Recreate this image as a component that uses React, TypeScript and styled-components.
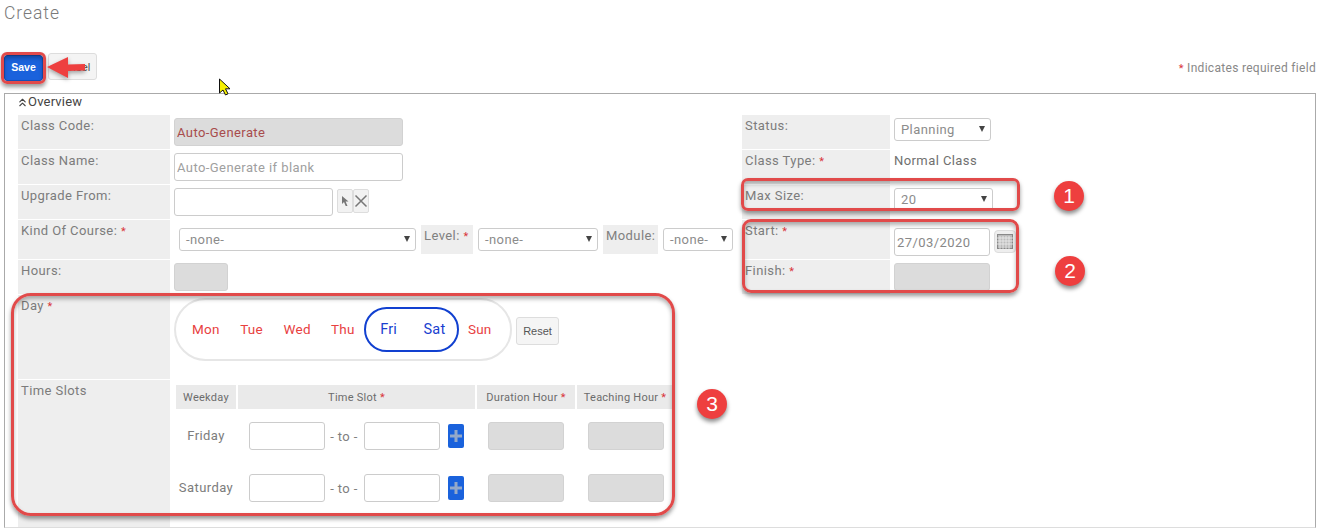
import React from "react";
import styled, { createGlobalStyle } from "styled-components";
import { ChevronsUp } from "lucide-react";

const Global = createGlobalStyle`
  html, body { margin: 0; padding: 0; background: #fff; }
  body { font-family: Roboto, "Liberation Sans", sans-serif; color: #808080; }
  * { box-sizing: border-box; }
`;

const Page = styled.div`
  position: relative;
  width: 1318px;
  height: 529px;
  overflow: hidden;
  padding-left: 4px;
  font-size: 13px;
  letter-spacing: 0.42px;
`;
const Title = styled.h1`
  margin: 0;
  height: 53px;
  padding-top: 2px;
  font-size: 17.5px;
  line-height: 22px;
  font-weight: 300;
  letter-spacing: 0.95px;
  color: #7a7a7a;
`;
const Toolbar = styled.div`
  display: flex;
  align-items: flex-start;
  height: 40px;
  padding-right: 2px;
`;
const SaveButton = styled.button`
  width: 39px;
  height: 26px;
  margin-top: 2px;
  padding: 0 0 2px;
  border: 1px solid #1450b8;
  border-radius: 3px;
  background: #1a62dc;
  color: #fff;
  font: 700 10.5px "Liberation Sans", sans-serif;
`;
const CancelButton = styled.button`
  width: 49px;
  height: 27px;
  margin-left: 5px;
  padding: 0;
  border: 1px solid #ddd;
  border-radius: 3px;
  background: #f4f4f4;
  color: #555;
  font: 11.5px "Liberation Sans", sans-serif;
`;
const Required = styled.span`
  margin-left: auto;
  margin-top: 8px;
  font-size: 12px;
  color: #888;
  letter-spacing: 0.3px;
`;
const Star = styled.span`
  color: #d9343a;
  font-size: 11px;
`;
const Panel = styled.section`
  width: 1312px;
  height: 435px;
  border: 1px solid #aaa;
  border-bottom-color: #ddd;
  padding-left: 13px;
`;
const PanelHead = styled.div`
  display: flex;
  align-items: flex-start;
  height: 21px;
  color: #444;
  font-size: 13px;
  letter-spacing: 0.2px;
  line-height: 15px;
  svg { margin: 2px -1px 0 -2px; }
`;
const Columns = styled.div`
  display: flex;
`;
const Column = styled.div<{ $width: number }>`
  width: ${(p) => p.$width}px;
  display: flex;
  flex-direction: column;
  gap: 1px;
`;
const Row = styled.div<{ $h: number; $label?: number }>`
  display: grid;
  grid-template-columns: ${(p) => p.$label ?? 152}px 1fr;
  height: ${(p) => p.$h}px;
`;
const Label = styled.div`
  background: #eee;
  padding: 2px 0 0 3px;
  line-height: 17px;
  color: #7c7c7c;
`;
const Value = styled.div<{ $indent?: number; $top?: number }>`
  display: flex;
  align-items: flex-start;
  padding-top: ${(p) => p.$top ?? 3}px;
  padding-left: ${(p) => p.$indent ?? 4}px;
  min-width: 0;
`;
const TextBox = styled.input<{ $width: number }>`
  width: ${(p) => p.$width}px;
  height: 28px;
  padding: 0 2px;
  border: 1px solid #ccc;
  border-radius: 3px;
  background: #fff;
  font: 13px Roboto, sans-serif;
  letter-spacing: 0.42px;
  color: #888;
  outline: none;
  &::placeholder { color: #a0a0a0; opacity: 1; }
  &:disabled { background: #dcdcdc; color: #a84c4c; border-color: #d2d2d2; }
`;
const PickButton = styled.button<{ $first?: boolean }>`
  display: flex;
  align-items: center;
  justify-content: center;
  width: 16px;
  height: 24px;
  margin: 1px 0 0 ${(p) => (p.$first ? 4 : 0)}px;
  padding: 0;
  border: 1px solid #ddd;
  border-radius: 2px;
  background: #f2f2f2;
`;
const SelectBox = styled.div<{ $width: number }>`
  display: flex;
  align-items: center;
  justify-content: space-between;
  width: ${(p) => p.$width}px;
  height: 23px;
  padding: 0 4px 1px 6px;
  border: 1px solid #ccc;
  border-radius: 3px;
  background: #fff;
  color: #8c8c8c;
  flex: none;
`;
const Caret = styled.i`
  width: 0;
  height: 0;
  border-left: 3.5px solid transparent;
  border-right: 3.5px solid transparent;
  border-top: 6px solid #444;
  margin-right: 1px;
`;
const InlineLabel = styled.div<{ $width: number; $gap: number }>`
  width: ${(p) => p.$width}px;
  height: 29px;
  margin: -3px 5px 0 ${(p) => p.$gap}px;
  padding: 2px 0 0 3px;
  background: #eee;
  line-height: 17px;
  white-space: nowrap;
  flex: none;
`;
const DayPill = styled.div`
  display: grid;
  grid-template-columns: repeat(7, 45.67px);
  align-items: center;
  justify-items: center;
  position: relative;
  width: 338px;
  height: 63px;
  padding-left: 7px;
  border: 2px solid #e6e6e6;
  border-radius: 32px;
`;
const Selected = styled.div`
  grid-column: 5 / span 2;
  grid-row: 1;
  justify-self: stretch;
  margin: 0 -2.5px 0 -2px;
  display: grid;
  grid-template-columns: 1fr 1fr;
  align-items: center;
  justify-items: center;
  height: 45px;
  border: 2px solid #1140d0;
  border-radius: 23px;
`;
const Day = styled.span<{ $on?: boolean }>`
  font-size: ${(p) => (p.$on ? 14.5 : 13.5)}px;
  letter-spacing: 0.2px;
  margin-bottom: 1px;
  color: ${(p) => (p.$on ? "#1a3fd0" : "#e8413f")};
`;
const ResetButton = styled.button`
  width: 43px;
  height: 28px;
  margin: 19px 0 0 4px;
  padding: 0;
  border: 1px solid #ddd;
  border-radius: 3px;
  background: #f5f5f5;
  font: 11px "Liberation Sans", sans-serif;
  color: #555;
`;
const SlotTable = styled.div`
  display: grid;
  grid-template-columns: 60px 237px 98px 96px;
  grid-auto-rows: 52px;
  column-gap: 2px;
`;
const SlotHead = styled.div`
  height: 24px;
  margin-bottom: -1px;
  background: #eaeaea;
  display: flex;
  align-items: center;
  justify-content: center;
  font-size: 11px;
  letter-spacing: 0.25px;
  color: #6c6c6c;
  white-space: nowrap;
`;
const HeadRow = styled(SlotTable)`
  grid-auto-rows: 25px;
`;
const DayName = styled.div`
  display: flex;
  align-items: center;
  justify-content: center;
  padding-bottom: 2px;
  color: #7c7c7c;
`;
const SlotCell = styled.div`
  display: flex;
  align-items: center;
  padding-left: 11px;
`;
const To = styled.span`
  width: 39px;
  padding-right: 1px;
  text-align: center;
  white-space: nowrap;
`;
const PlusButton = styled.button`
  display: flex;
  align-items: center;
  justify-content: center;
  width: 16px;
  height: 24px;
  margin-left: 8px;
  padding: 0;
  border: 0;
  border-radius: 2px;
  background: #1a62dc;
`;
const CalButton = styled.button`
  display: flex;
  align-items: center;
  justify-content: center;
  width: 22px;
  height: 23px;
  margin: 2px 0 0 4px;
  padding: 0;
  border: 1px solid #ddd;
  border-radius: 4px;
  background: #eee;
`;
const StaticText = styled.span`
  line-height: 17px;
  color: #707070;
`;
const Callout = styled.div<{ $x: number; $y: number; $w: number; $h: number; $r: number }>`
  position: absolute;
  left: ${(p) => p.$x}px;
  top: ${(p) => p.$y}px;
  width: ${(p) => p.$w}px;
  height: ${(p) => p.$h}px;
  border: 3px solid #e14a4a;
  border-radius: ${(p) => p.$r}px;
  box-shadow: 0 3px 4px rgba(0, 0, 0, 0.4), inset 0 3px 4px rgba(0, 0, 0, 0.3);
  pointer-events: none;
`;
const Badge = styled.div<{ $x: number; $y: number }>`
  position: absolute;
  left: ${(p) => p.$x}px;
  top: ${(p) => p.$y}px;
  width: 30px;
  height: 30px;
  border-radius: 50%;
  background: #ee3f3f;
  color: #fff;
  font: 21px/30px "Liberation Sans", sans-serif;
  text-align: center;
  letter-spacing: 0;
  box-shadow: 0 3px 4px rgba(0, 0, 0, 0.45);
`;
const Floating = styled.svg<{ $x: number; $y: number }>`
  position: absolute;
  left: ${(p) => p.$x}px;
  top: ${(p) => p.$y}px;
  overflow: visible;
`;

const Plus = () => (
  <svg width="14" height="14" viewBox="0 0 14 14">
    <path d="M5.5 1h3v4.500H13v3H8.500V13h-3V8.500H1v-3h4.500z" fill="#94a9c9" />
  </svg>
);

const Slot = ({ day }: { day: string }) => (
  <>
    <DayName>{day}</DayName>
    <SlotCell>
      <TextBox $width={76} />
      <To>- to -</To>
      <TextBox $width={76} />
      <PlusButton aria-label="Add"><Plus /></PlusButton>
    </SlotCell>
    <SlotCell><TextBox $width={76} disabled /></SlotCell>
    <SlotCell><TextBox $width={76} disabled /></SlotCell>
  </>
);

export default function App() {
  return (
    <Page>
      <Global />
      <Title>Create</Title>
      <Toolbar>
        <SaveButton>Save</SaveButton>
        <CancelButton>Cancel</CancelButton>
        <Required><Star>*</Star> Indicates required field</Required>
      </Toolbar>
      <Panel>
        <PanelHead><ChevronsUp size={13} strokeWidth={2} color="#444" />Overview</PanelHead>
        <Columns>
          <Column $width={724}>
            <Row $h={34}>
              <Label>Class Code:</Label>
              <Value><TextBox $width={229} disabled defaultValue="Auto-Generate" /></Value>
            </Row>
            <Row $h={34}>
              <Label>Class Name:</Label>
              <Value><TextBox $width={229} placeholder="Auto-Generate if blank" /></Value>
            </Row>
            <Row $h={34}>
              <Label>Upgrade From:</Label>
              <Value>
                <TextBox $width={159} />
                <PickButton $first aria-label="Pick">
                  <svg width="10" height="12" viewBox="0 0 10 12"><path d="M2 1l6.500 5.500H5.600L7.500 11H5.700L4 7l-2 2z" fill="#777" /></svg>
                </PickButton>
                <PickButton aria-label="Clear">
                  <svg width="14" height="14" viewBox="0 0 14 14"><path d="M1.500 1.500l11 11M12.500 1.500l-11 11" stroke="#777" strokeWidth="1.500" /></svg>
                </PickButton>
              </Value>
            </Row>
            <Row $h={39}>
              <Label>Kind Of Course: <Star>*</Star></Label>
              <Value $indent={9} $top={8}>
                <SelectBox $width={237}>-none-<Caret /></SelectBox>
                <InlineLabel $width={52} $gap={5}>Level: <Star>*</Star></InlineLabel>
                <SelectBox $width={120}>-none-<Caret /></SelectBox>
                <InlineLabel $width={55} $gap={5}>Module:</InlineLabel>
                <SelectBox $width={70}>-none-<Caret /></SelectBox>
              </Value>
            </Row>
            <Row $h={34}>
              <Label>Hours:</Label>
              <Value><TextBox $width={54} disabled /></Value>
            </Row>
            <Row $h={84}>
              <Label>Day <Star>*</Star></Label>
              <Value>
                <DayPill>
                  <Day>Mon</Day><Day>Tue</Day><Day>Wed</Day><Day>Thu</Day>
                  <Selected><Day $on>Fri</Day><Day $on>Sat</Day></Selected>
                  <Day>Sun</Day>
                </DayPill>
                <ResetButton>Reset</ResetButton>
              </Value>
            </Row>
            <Row $h={147}>
              <Label>Time Slots</Label>
              <Value $indent={6} $top={5}>
                <div>
                  <HeadRow>
                    <SlotHead>Weekday</SlotHead>
                    <SlotHead>Time Slot&nbsp;<Star>*</Star></SlotHead>
                    <SlotHead>Duration Hour&nbsp;<Star>*</Star></SlotHead>
                    <SlotHead>Teaching Hour&nbsp;<Star>*</Star></SlotHead>
                  </HeadRow>
                  <SlotTable>
                    <Slot day="Friday" />
                    <Slot day="Saturday" />
                  </SlotTable>
                </div>
              </Value>
            </Row>
          </Column>
          <Column $width={290}>
            <Row $h={34} $label={148}>
              <Label>Status:</Label>
              <Value><SelectBox $width={97}>Planning<Caret /></SelectBox></Value>
            </Row>
            <Row $h={34} $label={148}>
              <Label>Class Type: <Star>*</Star></Label>
              <Value $top={2}><StaticText>Normal Class</StaticText></Value>
            </Row>
            <Row $h={34} $label={148}>
              <Label>Max Size:</Label>
              <Value><SelectBox $width={99}>20<Caret /></SelectBox></Value>
            </Row>
            <Row $h={39} $label={148}>
              <Label>Start: <Star>*</Star></Label>
              <Value $top={8}>
                <TextBox $width={96} defaultValue="27/03/2020" />
                <CalButton aria-label="Calendar">
                  <svg width="16" height="15" viewBox="0 0 16 15">
                    <rect x="0.500" y="0.500" width="15" height="14" fill="#bbb" stroke="#888" />
                    <path d="M0 4h16M0 7h16M0 10h16M3 2v13M6 2v13M9 2v13M12 2v13" stroke="#eee" strokeWidth="0.800" />
                  </svg>
                </CalButton>
              </Value>
            </Row>
            <Row $h={34} $label={148}>
              <Label>Finish: <Star>*</Star></Label>
              <Value><TextBox $width={96} disabled /></Value>
            </Row>
          </Column>
        </Columns>
      </Panel>

      <Callout $x={1} $y={52} $w={45} $h={32} $r={6} />
      <Floating $x={46} $y={56} width="40" height="23" viewBox="0 0 40 23">
        <path d="M1 11L22 1v7.500l17-.5v6.500l-17 .500V22z" fill="#ee4040" style={{ filter: "drop-shadow(0 2px 2px rgba(0,0,0,.35))" }} />
      </Floating>
      <Floating $x={218} $y={78} width="15" height="18" viewBox="0 0 15 18">
        <path d="M1.500 1v14l3.500-3 2.500 5 2.500-1.200-2.500-5h4.500z" fill="#f5f000" stroke="#111" strokeWidth="1" />
      </Floating>
      <Callout $x={741} $y={178} $w={279} $h={33} $r={7} />
      <Callout $x={742} $y={219} $w={277} $h={74} $r={9} />
      <Callout $x={11} $y={293} $w={664} $h={223} $r={20} />
      <Badge $x={1054} $y={181}>1</Badge>
      <Badge $x={1055} $y={256}>2</Badge>
      <Badge $x={697} $y={389}>3</Badge>
    </Page>
  );
}
